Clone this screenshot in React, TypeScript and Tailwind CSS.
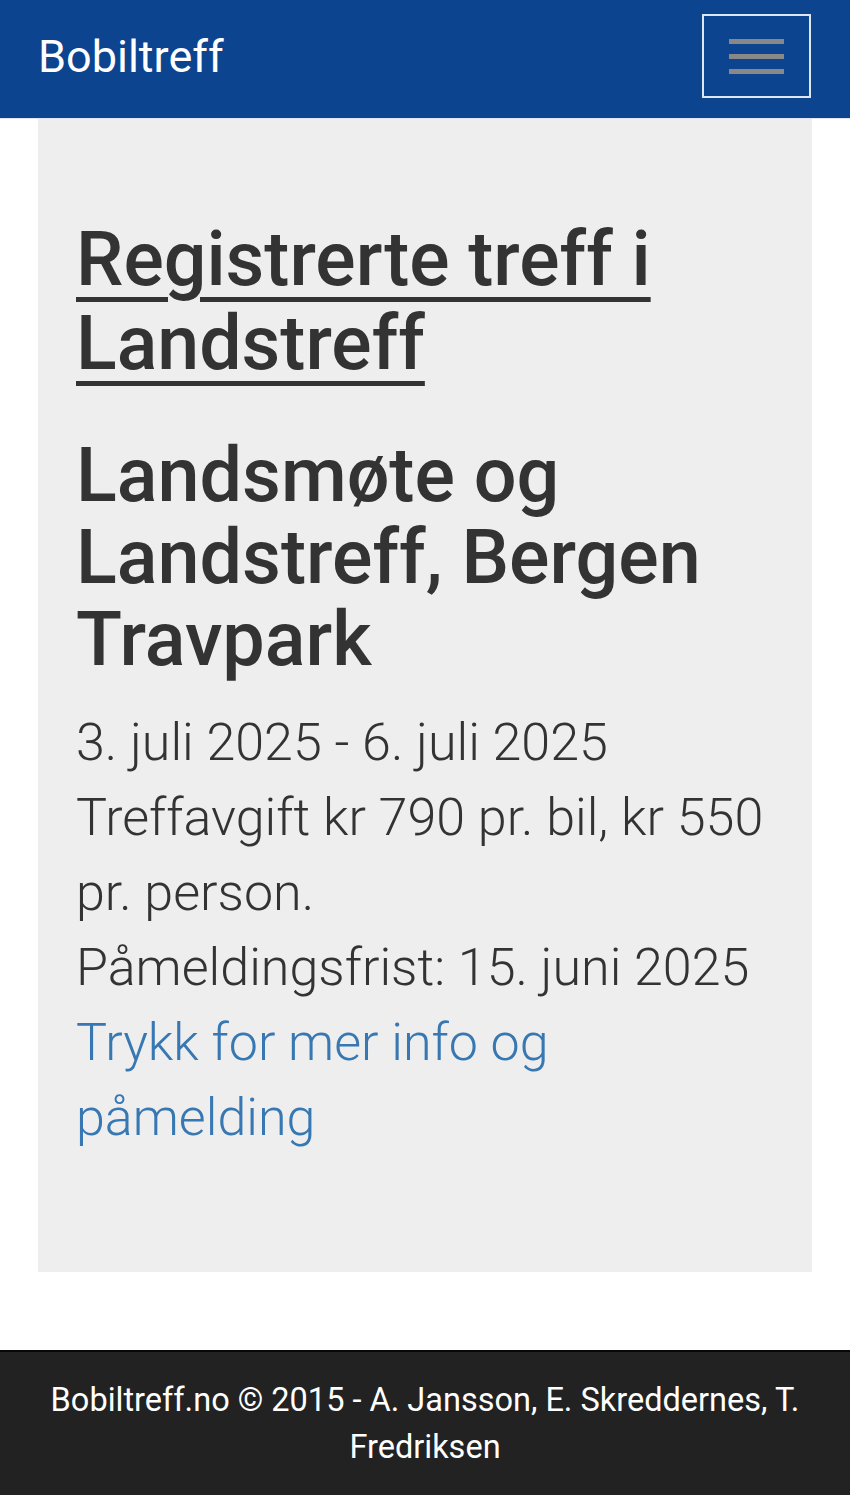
export default function App() {
  return (
    <div className="min-h-[1495px] flex flex-col bg-white font-['Roboto','Liberation_Sans',sans-serif] text-[#333]">
      <nav className="h-[119px] bg-[#0d448f] border-b border-[#dfe6f1] flex items-center justify-between pl-[38px] pr-[38px]">
        <a href="#" className="text-white text-[45px] leading-none -mt-[6px]">
          Bobiltreff
        </a>
        <button className="w-[109px] h-[84px] mr-[1px] -mt-[6px] border-2 border-[#dde6f3] flex flex-col items-center justify-center gap-[10px]">
          <span className="block w-[55px] h-[5px] bg-[#888]" />
          <span className="block w-[55px] h-[5px] bg-[#888]" />
          <span className="block w-[55px] h-[5px] bg-[#888]" />
        </button>
      </nav>

      <div className="px-[38px]">
        <div className="bg-[#eee] px-[38px] pt-[98px] pb-[117px]">
          <h1 className="text-[75.3px] leading-[84px] font-medium">
            <a href="#" className="underline decoration-[5px] underline-offset-[12px]">
              Registrerte treff i Landstreff
            </a>
          </h1>
          <h2 className="mt-[49px] text-[75.5px] leading-[82px] font-medium">
            Landsmøte og Landstreff, Bergen Travpark
          </h2>
          <p className="mt-[25px] text-[52px] leading-[75px] font-light">
            3. juli 2025 - 6. juli 2025
            <br />
            Treffavgift kr 790 pr. bil, kr 550 pr. person.
            <br />
            Påmeldingsfrist: 15. juni 2025
            <br />
            <a href="#" className="text-[#3777b2]">
              Trykk for mer info og påmelding
            </a>
          </p>
        </div>
      </div>

      <div className="h-[78px]" />

      <footer className="bg-[#222] border-t-2 border-[#080808] pt-[25px] pb-[25px] px-[30px] text-center text-white text-[32.5px] leading-[47px]">
        Bobiltreff.no © 2015 - A. Jansson, E. Skreddernes, T. Fredriksen
      </footer>
    </div>
  );
}
